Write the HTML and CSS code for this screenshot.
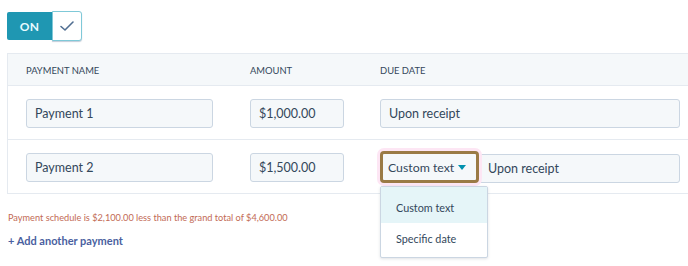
FILE: index.html
```html
<!DOCTYPE html>
<html>
<head>
<meta charset="utf-8">
<link rel="stylesheet" href="styles.css">
</head>
<body>
<div class="page">
  <div class="toggle">
    <div class="toggle-on">ON</div>
    <div class="toggle-check">
      <svg width="16" height="12" viewBox="0 0 16 12"><path d="M2 6.5 L6 10 L14 2" fill="none" stroke="#506e91" stroke-width="1.6" stroke-linecap="round" stroke-linejoin="round"/></svg>
    </div>
  </div>

  <div class="table">
    <div class="row head">
      <div class="th">Payment name</div>
      <div class="th">Amount</div>
      <div class="th">Due date</div>
    </div>
    <div class="row">
      <div class="input">Payment 1</div>
      <div class="input">$1,000.00</div>
      <div class="input">Upon receipt</div>
    </div>
    <div class="row">
      <div class="input">Payment 2</div>
      <div class="input">$1,500.00</div>
      <div class="due">
        <div class="select-wrap">
          <div class="select">Custom text <span class="caret"></span></div>
          <div class="menu">
            <div class="item active">Custom text</div>
            <div class="item second">Specific date</div>
          </div>
        </div>
        <div class="input grow">Upon receipt</div>
      </div>
    </div>
  </div>

  <div class="error">Payment schedule is $2,100.00 less than the grand total of $4,600.00</div>
  <div class="add">+ Add another payment</div>
</div>
</body>
</html>
```

FILE: styles.css
```css
* { box-sizing: border-box; }
html, body { margin: 0; padding: 0; background: #fff; }
body {
  font-family: Lato, "Open Sans", "Liberation Sans", sans-serif;
  color: #33475b;
  width: 688px;
  height: 266px;
  overflow: hidden;
}
.page { padding: 11px 0 0 7px; }

.toggle { display: flex; height: 30px; }
.toggle-on {
  width: 45px;
  background: #1f97b2;
  color: #e9fbff;
  font-size: 12px;
  font-weight: 700;
  letter-spacing: 0.3px;
  display: flex;
  align-items: center;
  justify-content: center;
  border-radius: 2px 0 0 2px;
  margin-top: 1px;
  height: 28px;
}
.toggle-check {
  width: 30px;
  height: 30px;
  border: 1px solid #7fc9d8;
  border-radius: 0 3px 3px 0;
  background: #fff;
  display: flex;
  align-items: center;
  justify-content: center;
  box-shadow: 0 1px 1px rgba(80,110,145,0.35);
}

.table {
  margin-top: 12px;
  border-left: 1px solid #e5eaf0;
}
.row {
  display: grid;
  grid-template-columns: 187px 94px 299px;
  column-gap: 37px;
  padding: 13px 0 12px 18px;
  border-bottom: 1px solid #e5eaf0;
  height: 54px;
}
.row.head {
  background: #f5f8fa;
  border-top: 1px solid #e5eaf0;
  height: 33px;
  padding: 0 0 0 18px;
  align-items: center;
}
.row > :nth-child(3) { margin-left: -1px; }
.th {
  text-transform: uppercase;
  font-size: 9.4px;
  color: #33475b;
  padding-top: 2px;
}
.input {
  height: 29px;
  background: #f5f8fa;
  border: 1px solid #cbd6e2;
  border-radius: 3px;
  font-size: 12.5px;
  color: #33475b;
  padding: 0 8px;
  display: flex;
  align-items: center;
}
.due { display: flex; align-items: center; }
.grow { flex: 1; border-radius: 0 3px 3px 0; }
.select-wrap { position: relative; }
.select {
  width: 99px;
  height: 32px;
  margin: -2px 0 0 0;
  border: 3px solid #9a7a45;
  border-radius: 4px;
  background: #f5f8fa;
  box-shadow: 0 0 0 3px #fde6f4;
  font-size: 12.3px;
  padding: 0 0 0 5px;
  display: flex;
  align-items: center;
  color: #33475b;
  white-space: nowrap;
}
.caret {
  display: inline-block;
  width: 0; height: 0;
  border-left: 4px solid transparent;
  border-right: 4px solid transparent;
  border-top: 5px solid #0091ae;
  margin-left: 4px;
  margin-top: 1px;
}
.menu {
  position: absolute;
  left: 0;
  top: 33px;
  width: 108px;
  height: 72px;
  background: #fff;
  border: 1px solid #cbd6e2;
  border-radius: 2px;
  box-shadow: 0 1px 3px rgba(45,62,80,0.15);
  z-index: 5;
}
.item {
  font-size: 10.8px;
  padding-left: 15px;
  display: flex;
  align-items: center;
  color: #33475b;
}
.item.active { background: #e5f5f8; height: 36px; padding-top: 5px; }
.item.second { height: 30px; }

.error {
  margin-top: 18px;
  margin-left: 1px;
  font-size: 9.2px;
  color: #c26a55;
}
.add {
  margin-top: 11px;
  margin-left: 1px;
  font-size: 11px;
  font-weight: 700;
  color: #4a5fa0;
}
```
